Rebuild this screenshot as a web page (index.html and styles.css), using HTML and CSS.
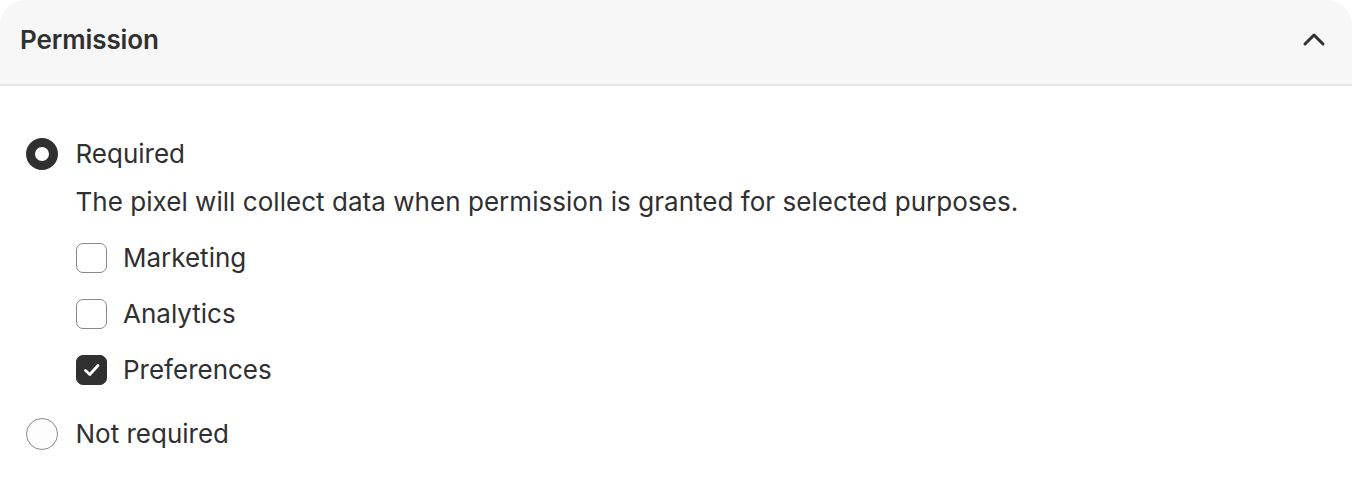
FILE: index.html
```html
<!DOCTYPE html>
<html>
<head>
<meta charset="utf-8">
<link rel="stylesheet" href="styles.css">
</head>
<body>
<div class="card">
  <div class="header">
    <h2 class="title">Permission</h2>
    <svg class="chevron" width="24" height="24" viewBox="0 0 24 24"><path d="M3 16 L12 7 L21 16" fill="none" stroke="#303030" stroke-width="3" stroke-linecap="round" stroke-linejoin="round"/></svg>
  </div>
  <div class="content">
    <div class="option">
      <span class="radio checked"></span>
      <span class="label">Required</span>
    </div>
    <div class="sub">
      <p class="desc">The pixel will collect data when permission is granted for selected purposes.</p>
      <div class="checks">
        <div class="check-row"><span class="box"></span><span class="label">Marketing</span></div>
        <div class="check-row"><span class="box"></span><span class="label">Analytics</span></div>
        <div class="check-row"><span class="box on"><svg width="22" height="22" viewBox="0 0 22 22"><path d="M4.5 11.5 L8.8 15.5 L17 6.5" fill="none" stroke="#fff" stroke-width="2.8" stroke-linecap="round" stroke-linejoin="round"/></svg></span><span class="label">Preferences</span></div>
      </div>
    </div>
    <div class="option last">
      <span class="radio"></span>
      <span class="label">Not required</span>
    </div>
  </div>
</div>
</body>
</html>
```
FILE: styles.css
```css
html, body { margin: 0; padding: 0; background: #fff; }
body { font-family: Inter, "Noto Sans", sans-serif; color: #303030; }
.card { border-radius: 26px 26px 0 0; overflow: hidden; background: #fff; }
.header {
  box-sizing: border-box; height: 86px; background: #f7f7f7; border-bottom: 2px solid #e6e6e6;
  display: flex; align-items: center; justify-content: space-between;
  padding: 0 26px 4px 20px;
}
.title { margin: 0; font-size: 26px; font-weight: 600; line-height: 40px; letter-spacing: -0.1px; }
.chevron { display: block; }
.content { padding: 48px 26px 0 26px; }
.option { display: flex; align-items: center; height: 40px; }
.option.last { margin-top: 24px; }
.radio {
  width: 32px; height: 32px; box-sizing: border-box; border-radius: 50%;
  border: 1.5px solid #8a8a8a; background: #fdfdfd; margin-right: 17.5px; flex: none;
}
.radio.checked { border: 9px solid #303030; background: #fff; }
.label { font-size: 26px; line-height: 40px; font-weight: 400; }
.sub { padding-left: 50px; }
.desc { margin: 8px 0 0 -0.5px; font-size: 26px; line-height: 40px; letter-spacing: 0.04px; }
.checks { display: flex; flex-direction: column; gap: 16px; margin-top: 16px; }
.check-row { display: flex; align-items: center; height: 40px; }
.box {
  width: 31px; height: 30px; box-sizing: border-box; border: 1.5px solid #8a8a8a;
  border-radius: 7px; margin-right: 16px; flex: none; background: #fff;
  display: flex; align-items: center; justify-content: center;
}
.box.on { background: #303030; border-color: #303030; }
.box svg { display: block; }
```
